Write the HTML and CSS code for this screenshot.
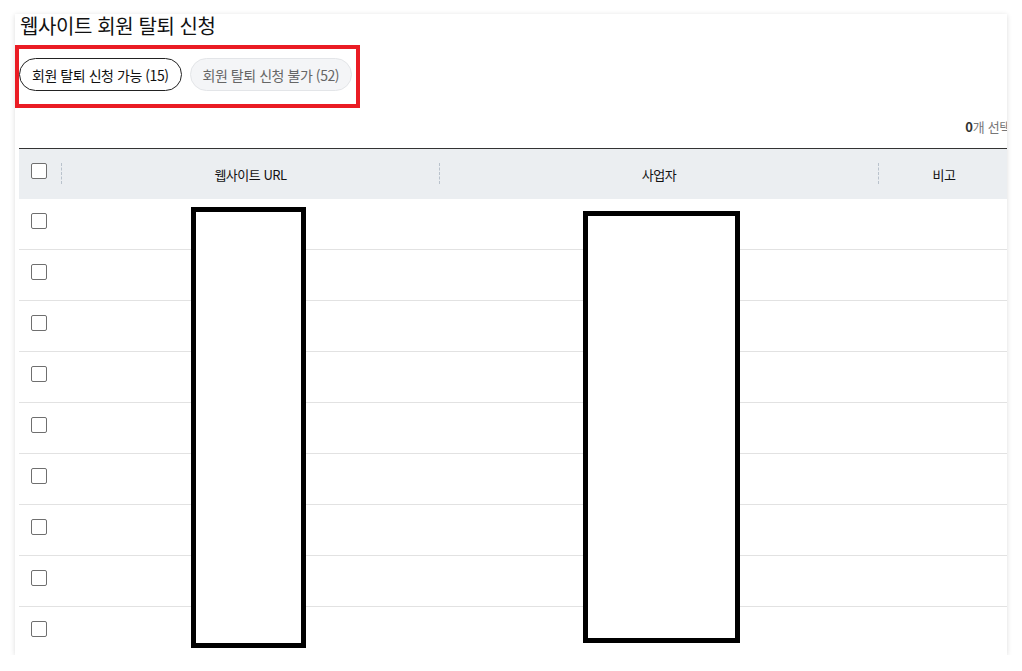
FILE: index.html
```html
<!DOCTYPE html>
<html lang="ko">
<head>
<meta charset="utf-8">
<title>웹사이트 회원 탈퇴 신청</title>
<link rel="stylesheet" href="styles.css">
</head>
<body>
<div class="card">
  <h1 class="title">웹사이트 회원 탈퇴 신청</h1>
  <div class="tabs">
    <button class="tab tab-active">회원 탈퇴 신청 가능 (15)</button>
    <button class="tab tab-muted">회원 탈퇴 신청 불가 (52)</button>
  </div>
  <div class="clip">
    <div class="count"><b>0</b>개 선택</div>
    <div class="table">
      <div class="row head">
        <div class="cell cell-check"><span class="checkbox"></span></div>
        <div class="cell hcell"><span class="sep"></span><span class="label">웹사이트 URL</span></div>
        <div class="cell hcell"><span class="sep"></span><span class="label">사업자</span></div>
        <div class="cell hcell"><span class="sep"></span><span class="label">비고</span></div>
      </div>
      <div class="row"><div class="cell cell-check"><span class="checkbox"></span></div><div class="cell"></div><div class="cell"></div><div class="cell"></div></div>
      <div class="row"><div class="cell cell-check"><span class="checkbox"></span></div><div class="cell"></div><div class="cell"></div><div class="cell"></div></div>
      <div class="row"><div class="cell cell-check"><span class="checkbox"></span></div><div class="cell"></div><div class="cell"></div><div class="cell"></div></div>
      <div class="row"><div class="cell cell-check"><span class="checkbox"></span></div><div class="cell"></div><div class="cell"></div><div class="cell"></div></div>
      <div class="row"><div class="cell cell-check"><span class="checkbox"></span></div><div class="cell"></div><div class="cell"></div><div class="cell"></div></div>
      <div class="row"><div class="cell cell-check"><span class="checkbox"></span></div><div class="cell"></div><div class="cell"></div><div class="cell"></div></div>
      <div class="row"><div class="cell cell-check"><span class="checkbox"></span></div><div class="cell"></div><div class="cell"></div><div class="cell"></div></div>
      <div class="row"><div class="cell cell-check"><span class="checkbox"></span></div><div class="cell"></div><div class="cell"></div><div class="cell"></div></div>
      <div class="row"><div class="cell cell-check"><span class="checkbox"></span></div><div class="cell"></div><div class="cell"></div><div class="cell"></div></div>
    </div>
  </div>
</div>
<div class="mark mark-red"></div>
<div class="mark mark-black mark-1"></div>
<div class="mark mark-black mark-2"></div>
</body>
</html>
```
FILE: styles.css
```css
* { box-sizing: border-box; }
html, body {
  margin: 0;
  padding: 0;
  background: #fff;
  font-family: "Noto Sans CJK KR", "Noto Sans", sans-serif;
  color: #111;
}
.card {
  margin: 15px 0 0 15px;
  width: 992px;
  height: 641px;
  background: #fff;
  box-shadow: 0 1px 5px rgba(0, 0, 0, 0.14);
  padding-left: 4px;
}
.title {
  margin: -1px 0 0 0;
  font-size: 20px;
  line-height: 24px;
  font-weight: 400;
  letter-spacing: -0.4px;
  color: #111;
  padding-left: 1px;
}
.tabs {
  display: flex;
  gap: 8px;
  margin-top: 20px;
}
.tab {
  height: 33px;
  border-radius: 17px;
  padding: 0 12px;
  font-family: inherit;
  font-size: 14px;
  letter-spacing: -0.45px;
  display: flex;
  align-items: center;
  background: #fff;
  cursor: pointer;
}
.tab-active {
  border: 1px solid #222;
  color: #111;
}
.tab-muted {
  border: 1px solid #e3e5e8;
  background: #f4f5f7;
  color: #666;
}
.clip {
  width: 100%;
  height: 565px;
  overflow: hidden;
}
.count {
  width: 992px;
  margin-top: 26px;
  height: 20px;
  line-height: 20px;
  text-align: right;
  font-size: 13px;
  color: #777;
  letter-spacing: -0.3px;
}
.count b {
  color: #333;
  font-weight: 700;
}
.table {
  width: 990px;
  margin-top: 11px;
  border-top: 1px solid #333;
}
.row {
  display: grid;
  grid-template-columns: 42px 378px 439px 131px;
  height: 51px;
  border-bottom: 1px solid #e2e2e2;
}
.row.head {
  height: 50px;
  border-bottom: none;
  background: #ebeef1;
}
.cell {
  height: 100%;
}
.cell-check {
  padding: 14px 0 0 12px;
}
.checkbox {
  display: block;
  width: 16px;
  height: 16px;
  border: 1px solid #6f6f6f;
  border-radius: 2px;
  background: #fff;
}
.hcell {
  display: flex;
  align-items: center;
}
.sep {
  width: 0;
  height: 21px;
  border-left: 1px dashed #b9c2cc;
  margin-top: -2px;
}
.label {
  flex: 1;
  text-align: center;
  font-size: 13px;
  font-weight: 400;
  color: #111;
  letter-spacing: -0.5px;
  margin-top: 1px;
}
.mark {
  position: absolute;
}
.mark-red {
  left: 15px;
  top: 45px;
  width: 345px;
  height: 63px;
  border: 4px solid #ea1c24;
}
.mark-black {
  border: 5px solid #000;
  background: #fff;
}
.mark-1 {
  left: 191px;
  top: 207px;
  width: 115px;
  height: 441px;
}
.mark-2 {
  left: 583px;
  top: 211px;
  width: 157px;
  height: 432px;
}
```
